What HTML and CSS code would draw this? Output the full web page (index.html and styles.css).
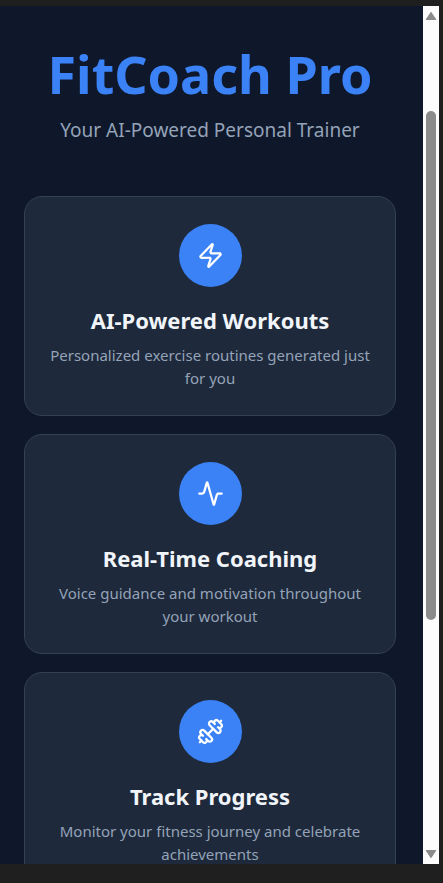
FILE: index.html
```html
<!DOCTYPE html>
<html lang="en">
<head>
<meta charset="utf-8">
<meta name="viewport" content="width=device-width, initial-scale=1">
<title>FitCoach Pro</title>
<link rel="stylesheet" href="styles.css">
</head>
<body>
<div class="window">
  <main class="page">
    <header class="hero">
      <h1 class="hero-title">FitCoach Pro</h1>
      <p class="hero-tagline">Your AI-Powered Personal Trainer</p>
    </header>
    <section class="features">
      <article class="card">
        <div class="card-icon">
          <svg class="icon" viewBox="0 0 24 24" aria-hidden="true"><path d="M4 14a1 1 0 0 1-.78-1.63l9.9-10.2a.5.5 0 0 1 .86.46l-1.92 6.02A1 1 0 0 0 13 10h7a1 1 0 0 1 .78 1.63l-9.9 10.2a.5.5 0 0 1-.86-.46l1.92-6.02A1 1 0 0 0 11 14z"/></svg>
        </div>
        <h2 class="card-title">AI-Powered Workouts</h2>
        <p class="card-text">Personalized exercise routines generated just for you</p>
      </article>
      <article class="card">
        <div class="card-icon">
          <svg class="icon" viewBox="0 0 24 24" aria-hidden="true"><path d="M22 12h-2.48a2 2 0 0 0-1.93 1.46l-2.35 8.36a.25.25 0 0 1-.48 0L9.24 2.18a.25.25 0 0 0-.48 0l-2.35 8.36A2 2 0 0 1 4.49 12H2"/></svg>
        </div>
        <h2 class="card-title">Real-Time Coaching</h2>
        <p class="card-text">Voice guidance and motivation throughout your workout</p>
      </article>
      <article class="card">
        <div class="card-icon">
          <svg class="icon" viewBox="0 0 24 24" aria-hidden="true"><path d="M17.596 12.768a2 2 0 1 0 2.829-2.829l-1.768-1.767a2 2 0 0 0 2.828-2.829l-2.828-2.828a2 2 0 0 0-2.829 2.828l-1.767-1.768a2 2 0 1 0-2.829 2.829z"/><path d="m2.5 21.5 1.4-1.4"/><path d="m20.1 3.9 1.4-1.4"/><path d="M5.343 21.485a2 2 0 1 0 2.829-2.828l1.767 1.768a2 2 0 1 0 2.829-2.829l-6.364-6.364a2 2 0 1 0-2.829 2.829l1.768 1.767a2 2 0 0 0-2.828 2.829z"/><path d="m9.6 14.4 4.8-4.8"/></svg>
        </div>
        <h2 class="card-title">Track Progress</h2>
        <p class="card-text">Monitor your fitness journey and celebrate achievements</p>
      </article>
    </section>
  </main>
  <div class="scrollbar" aria-hidden="true">
    <svg class="arrow" viewBox="0 0 12 10"><path d="M6 2 10 8H2z"/></svg>
    <div class="track">
      <div class="space-before"></div>
      <div class="thumb"></div>
      <div class="space-after"></div>
    </div>
    <svg class="arrow" viewBox="0 0 12 10"><path d="M6 8 2 2h8z"/></svg>
  </div>
</div>
</body>
</html>
```
FILE: styles.css
```css
* {
  box-sizing: border-box;
}

body {
  margin: 0;
  background: #1f1f20;
  font-family: "Segoe UI", "Noto Sans", "Open Sans", sans-serif;
}

h1, h2, p {
  margin: 0;
}

.window {
  display: flex;
  height: 100vh;
  padding: 6px 4px 19px 0;
}

.page {
  flex: 1;
  min-width: 0;
  overflow: hidden;
  padding: 32px 27px 32px 24px;
  background: #0f172a;
  text-align: center;
}

.hero {
  margin-bottom: 52px;
}

.hero-title {
  color: #3b82f6;
  font-size: 52px;
  font-weight: 700;
  line-height: 72px;
}

.hero-tagline {
  color: #94a3b8;
  font-size: 19px;
  line-height: 28px;
  margin-top: 6px;
}

.features {
  display: grid;
  gap: 18px;
}

.card {
  padding: 27px 22px 25px;
  border: 1px solid #334155;
  border-radius: 18px;
  background: #1e293b;
}

.card-icon {
  display: flex;
  align-items: center;
  justify-content: center;
  width: 63px;
  height: 63px;
  margin: 0 auto 18px;
  border-radius: 50%;
  background: #3b82f6;
}

.icon {
  width: 27px;
  height: 27px;
  fill: none;
  stroke: #fff;
  stroke-width: 2;
  stroke-linecap: round;
  stroke-linejoin: round;
}

.card-title {
  color: #f1f5f9;
  font-size: 22px;
  font-weight: 700;
  line-height: 30px;
}

.card-text {
  margin-top: 9px;
  color: #94a3b8;
  font-size: 15px;
  line-height: 23px;
}

.scrollbar {
  display: flex;
  flex-direction: column;
  align-items: center;
  width: 16px;
  padding: 4px 0;
  background: #fcfcfc;
}

.arrow {
  width: 14px;
  height: 12px;
  fill: #8b8b8b;
  stroke: #8b8b8b;
  stroke-width: 1;
  stroke-linejoin: round;
}

.track {
  display: flex;
  flex: 1;
  flex-direction: column;
  width: 10px;
}

.space-before {
  flex: 89;
}

.thumb {
  flex: 509;
  border-radius: 5px;
  background: #8b8b8b;
}

.space-after {
  flex: 228;
}
```
